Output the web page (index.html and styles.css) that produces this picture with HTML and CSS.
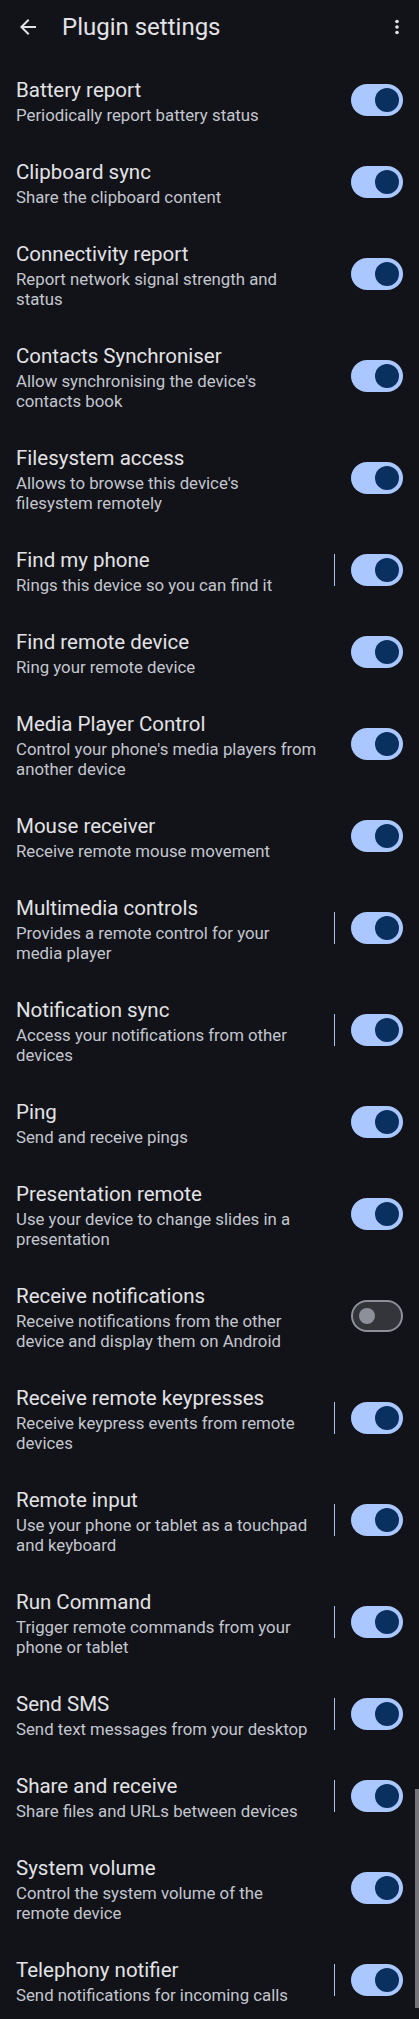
FILE: index.html
```html
<!DOCTYPE html>
<html lang="en">
<head>
<meta charset="utf-8">
<title>Plugin settings</title>
<link rel="stylesheet" href="styles.css">
</head>
<body>
<div class="screen">
  <header class="appbar">
    <button class="icon-btn back" aria-label="Back">
      <svg width="24" height="24" viewBox="0 0 24 24"><path d="M20 11H7.83l5.59-5.59L12 4l-8 8 8 8 1.41-1.41L7.83 13H20v-2z" fill="#e3e2e6"/></svg>
    </button>
    <h1 class="appbar-title">Plugin settings</h1>
    <button class="icon-btn more" aria-label="More options">
      <svg width="24" height="24" viewBox="0 0 24 24"><circle cx="12" cy="6" r="2" fill="#e3e2e6"/><circle cx="12" cy="12" r="2" fill="#e3e2e6"/><circle cx="12" cy="18" r="2" fill="#e3e2e6"/></svg>
    </button>
  </header>

  <ul class="list">
    <li class="pref"><div class="text"><div class="title">Battery report</div><div class="summary">Periodically report battery status</div></div><div class="widget"><span class="switch on"></span></div></li>
    <li class="pref"><div class="text"><div class="title">Clipboard sync</div><div class="summary">Share the clipboard content</div></div><div class="widget"><span class="switch on"></span></div></li>
    <li class="pref"><div class="text"><div class="title">Connectivity report</div><div class="summary">Report network signal strength and<br>status</div></div><div class="widget"><span class="switch on"></span></div></li>
    <li class="pref"><div class="text"><div class="title">Contacts Synchroniser</div><div class="summary">Allow synchronising the device's<br>contacts book</div></div><div class="widget"><span class="switch on"></span></div></li>
    <li class="pref"><div class="text"><div class="title">Filesystem access</div><div class="summary">Allows to browse this device's<br>filesystem remotely</div></div><div class="widget"><span class="switch on"></span></div></li>
    <li class="pref"><div class="text"><div class="title">Find my phone</div><div class="summary">Rings this device so you can find it</div></div><div class="widget"><span class="divider"></span><span class="switch on"></span></div></li>
    <li class="pref"><div class="text"><div class="title">Find remote device</div><div class="summary">Ring your remote device</div></div><div class="widget"><span class="switch on"></span></div></li>
    <li class="pref"><div class="text"><div class="title">Media Player Control</div><div class="summary">Control your phone's media players from<br>another device</div></div><div class="widget"><span class="switch on"></span></div></li>
    <li class="pref"><div class="text"><div class="title">Mouse receiver</div><div class="summary">Receive remote mouse movement</div></div><div class="widget"><span class="switch on"></span></div></li>
    <li class="pref"><div class="text"><div class="title">Multimedia controls</div><div class="summary">Provides a remote control for your<br>media player</div></div><div class="widget"><span class="divider"></span><span class="switch on"></span></div></li>
    <li class="pref"><div class="text"><div class="title">Notification sync</div><div class="summary">Access your notifications from other<br>devices</div></div><div class="widget"><span class="divider"></span><span class="switch on"></span></div></li>
    <li class="pref"><div class="text"><div class="title">Ping</div><div class="summary">Send and receive pings</div></div><div class="widget"><span class="switch on"></span></div></li>
    <li class="pref"><div class="text"><div class="title">Presentation remote</div><div class="summary">Use your device to change slides in a<br>presentation</div></div><div class="widget"><span class="switch on"></span></div></li>
    <li class="pref"><div class="text"><div class="title">Receive notifications</div><div class="summary">Receive notifications from the other<br>device and display them on Android</div></div><div class="widget"><span class="switch off"></span></div></li>
    <li class="pref"><div class="text"><div class="title">Receive remote keypresses</div><div class="summary">Receive keypress events from remote<br>devices</div></div><div class="widget"><span class="divider"></span><span class="switch on"></span></div></li>
    <li class="pref"><div class="text"><div class="title">Remote input</div><div class="summary">Use your phone or tablet as a touchpad<br>and keyboard</div></div><div class="widget"><span class="divider"></span><span class="switch on"></span></div></li>
    <li class="pref"><div class="text"><div class="title">Run Command</div><div class="summary">Trigger remote commands from your<br>phone or tablet</div></div><div class="widget"><span class="divider"></span><span class="switch on"></span></div></li>
    <li class="pref"><div class="text"><div class="title">Send SMS</div><div class="summary">Send text messages from your desktop</div></div><div class="widget"><span class="divider"></span><span class="switch on"></span></div></li>
    <li class="pref"><div class="text"><div class="title">Share and receive</div><div class="summary">Share files and URLs between devices</div></div><div class="widget"><span class="divider"></span><span class="switch on"></span></div></li>
    <li class="pref"><div class="text"><div class="title">System volume</div><div class="summary">Control the system volume of the<br>remote device</div></div><div class="widget"><span class="switch on"></span></div></li>
    <li class="pref"><div class="text"><div class="title">Telephony notifier</div><div class="summary">Send notifications for incoming calls</div></div><div class="widget"><span class="divider"></span><span class="switch on"></span></div></li>
  </ul>
  <div class="scrollbar"></div>
</div>
</body>
</html>
```

FILE: styles.css
```css
* { box-sizing: border-box; }
html, body {
  margin: 0;
  padding: 0;
  background: #111318;
}
body {
  font-family: Roboto, "Noto Sans", "Liberation Sans", sans-serif;
  color: #e3e2e6;
  overflow: hidden;
}
.screen {
  position: relative;
  width: 419px;
  min-height: 2019px;
  background: #111318;
  overflow: hidden;
}
.appbar {
  height: 54px;
  display: flex;
  align-items: center;
  padding: 0 10px 0 16px;
}
.icon-btn {
  background: none;
  border: 0;
  padding: 0;
  width: 24px;
  height: 24px;
  display: flex;
  align-items: center;
  justify-content: center;
}
.back { margin-right: 22px; }
.more { margin-left: auto; }
.more svg { width: 22px; height: 22px; }
.appbar-title {
  margin: 0;
  font-size: 24px;
  font-weight: 400;
  color: #e3e2e6;
  letter-spacing: 0;
}
.list {
  list-style: none;
  margin: 0;
  padding: 5px 0 0 0;
}
.pref {
  display: flex;
  align-items: center;
  padding: 16px 16px 16px 16px;
}
.text {
  flex: 1;
  min-width: 0;
}
.title {
  font-size: 20.5px;
  line-height: 30px;
  color: #e3e2e6;
}
.summary {
  font-size: 16.8px;
  line-height: 20px;
  color: #c4c6cf;
}
.widget {
  width: 78px;
  flex: none;
  display: flex;
  align-items: center;
  justify-content: flex-end;
}
.divider {
  width: 1px;
  height: 32px;
  background: #a9c3f5;
  margin-right: 16px;
}
.switch {
  position: relative;
  width: 52px;
  height: 32px;
  border-radius: 16px;
  flex: none;
}
.switch::after {
  content: "";
  position: absolute;
  top: 50%;
  border-radius: 50%;
}
.switch.on { background: #aac7ff; }
.switch.on::after {
  width: 24px;
  height: 24px;
  right: 4px;
  margin-top: -12px;
  background: #0a305f;
}
.switch.off {
  background: #33353a;
  border: 2px solid #8e9099;
}
.switch.off::after {
  width: 16px;
  height: 16px;
  left: 6px;
  margin-top: -8px;
  background: #8e9099;
}
.scrollbar {
  position: absolute;
  right: 0;
  top: 1789px;
  width: 4px;
  height: 219px;
  background: #76767a;
}
```
